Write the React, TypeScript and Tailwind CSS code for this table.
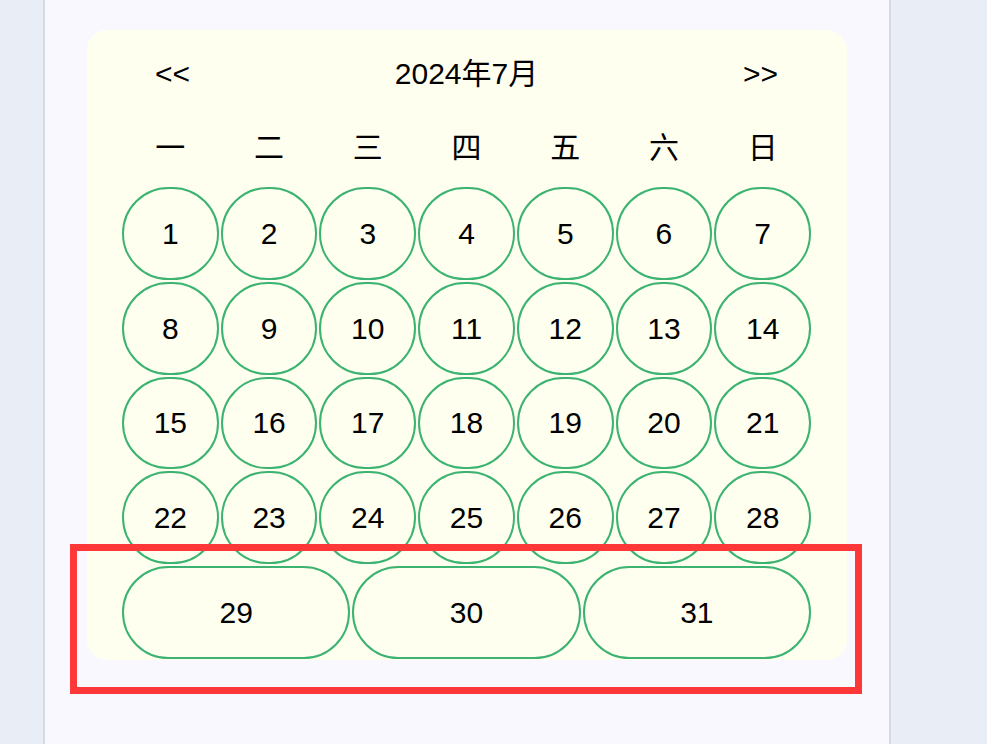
import * as React from "react"

const WEEK = ["一", "二", "三", "四", "五", "六", "日"]

// July 2024 starts on a Monday, so days fill the grid from the first cell
const DAYS = Array.from({ length: 31 }, (_, i) => i + 1)

const DayCell = ({ day }: { day: number }) => {
  return (
    <div className="flex-[1_0_13%] mx-px my-px h-[92.75px] flex items-center justify-center rounded-[50px] border-2 border-[#3cb371] text-[30px] text-black">
      {day}
    </div>
  )
}

export default function App() {
  return (
    <div
      className="min-h-screen w-full bg-[#e9eef6]"
      style={{ fontFamily: '"Liberation Sans", "Noto Sans CJK SC", sans-serif' }}
    >
      <div className="ml-[43px] w-[848px] min-h-screen bg-[#f9f8fe] border-x-2 border-[#d6dae1] pt-[30px]">
        {/* Calendar card */}
        <div className="ml-[42px] w-[760px] rounded-[20px] bg-[#fffff0] pl-[34px] pr-[35px] pt-[26px]">
          {/* Header: prev / month / next */}
          <div className="grid grid-cols-3 items-center h-[35px] pl-[34px] pr-[34px] text-[30px] leading-none text-black">
            <span className="justify-self-start">&lt;&lt;</span>
            <span className="justify-self-center whitespace-nowrap">2024年7月</span>
            <span className="justify-self-end">&gt;&gt;</span>
          </div>

          {/* Week labels */}
          <div className="mt-[33px] h-[48px] flex items-center">
            {WEEK.map((w) => (
              <div key={w} className="flex-1 text-center text-[30px] leading-none text-black">
                {w}
              </div>
            ))}
          </div>

          {/* Days */}
          <div className="mt-[14px] flex flex-wrap">
            {DAYS.map((d) => (
              <DayCell key={d} day={d} />
            ))}
          </div>
        </div>
      </div>

      {/* Annotation box over the last row */}
      <div className="absolute left-[70px] top-[544px] w-[792px] h-[150px] border-[7px] border-[#fe3838] pointer-events-none" />
    </div>
  )
}
